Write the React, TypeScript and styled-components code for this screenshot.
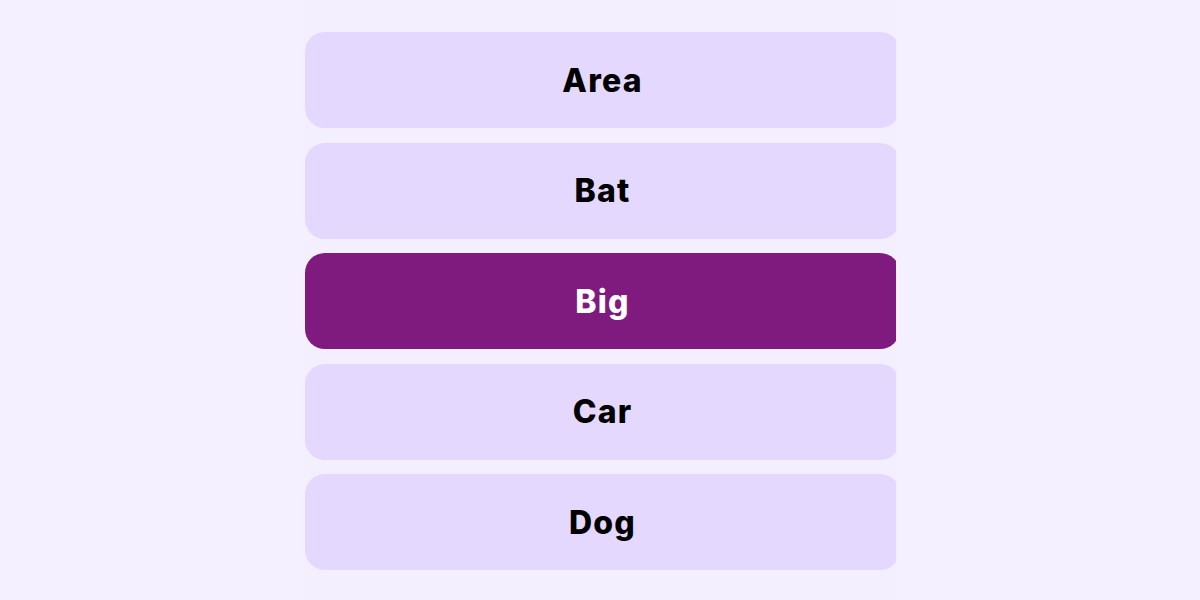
import React, { useState } from "react";
import styled, { createGlobalStyle } from "styled-components";

const GlobalStyle = createGlobalStyle`
  html, body {
    margin: 0;
    padding: 0;
    background: #f5f0ff;
    font-family: "Inter", "Roboto", "Liberation Sans", sans-serif;
  }
`;

const Page = styled.div`
  display: flex;
  justify-content: center;
  width: 1200px;
  height: 600px;
  overflow: hidden;
`;

const List = styled.ul`
  list-style: none;
  margin: 0;
  padding: 32px 0 0;
  width: 591px;
  margin-left: 1px;
  height: 568px;
  overflow: hidden;
  display: flex;
  flex-direction: column;
  gap: 14.5px;
  background: #f4effe;
`;

const Option = styled.li<{ $active: boolean }>`
  flex: 0 0 96px;
  width: 595px;
  box-sizing: border-box;
  border-radius: 20px;
  display: flex;
  align-items: center;
  justify-content: center;
  background: ${(p) => (p.$active ? "#7f1a7e" : "#e4d8ff")};
  color: ${(p) => (p.$active ? "#ffffff" : "#000000")};
  font-size: 32px;
  font-weight: 800;
  letter-spacing: 1.2px;
  cursor: pointer;
  user-select: none;
`;

const words = ["Area", "Bat", "Big", "Car", "Dog"];

export default function App() {
  const [selected, setSelected] = useState("Big");
  return (
    <>
      <GlobalStyle />
      <Page>
        <List>
          {words.map((w) => (
            <Option key={w} $active={w === selected} onClick={() => setSelected(w)}>
              {w}
            </Option>
          ))}
        </List>
      </Page>
    </>
  );
}
